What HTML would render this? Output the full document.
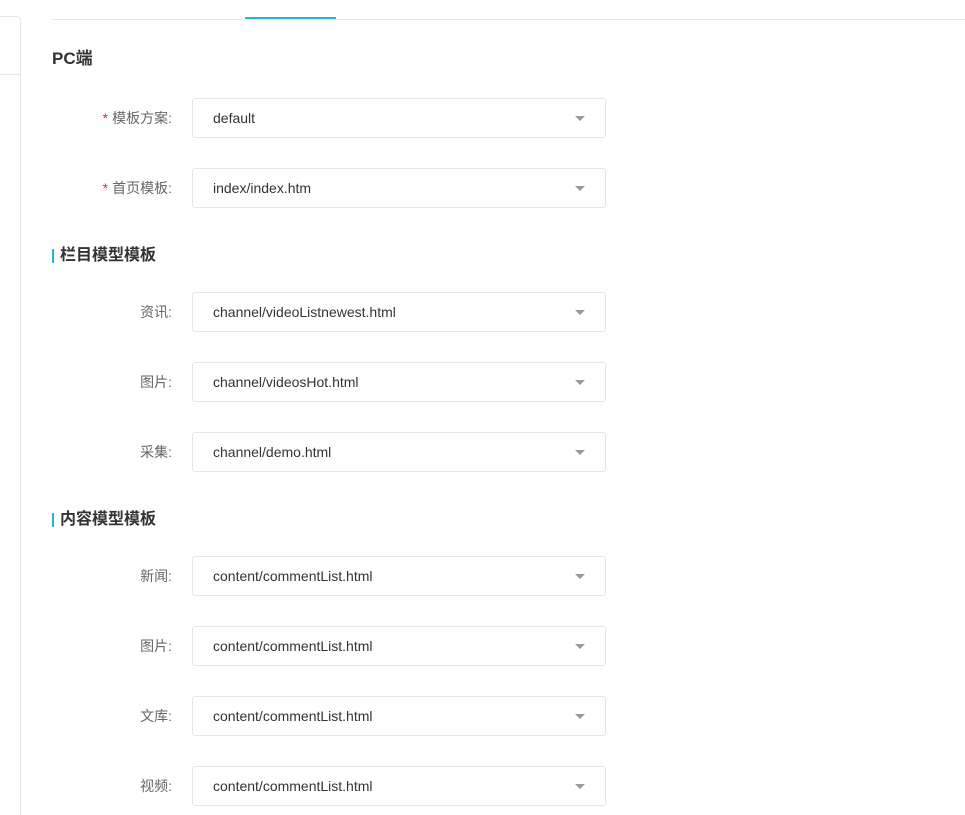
<!DOCTYPE html>
<html style="width:965px;height:815px;overflow:hidden"><head><meta charset="utf-8"><style>
body{margin:0;width:965px;height:815px;background:#fff;font-family:"Liberation Sans","Noto Sans CJK SC",sans-serif;position:relative;overflow:hidden;color:#333}
.lp{position:absolute;left:0;top:16px;width:20px;height:798px;border:1px solid #e6e6e6;border-left:none;border-bottom:none;border-radius:0 4px 0 0}
.lh{position:absolute;left:0;top:74px;width:21px;height:1px;background:#e6e6e6}
.tl{position:absolute;left:52px;top:19px;width:913px;height:1px;background:#e6e6e6}
.tb{position:absolute;left:245px;top:17px;width:91px;height:2px;background:#1fb5d6}
.h{position:absolute;left:52px;font-size:16px;font-weight:bold;color:#333;line-height:20px}
.h.bar{padding-left:8px}
.h.bar:before{content:"";position:absolute;left:0;top:3px;width:2px;height:14px;background:#1fb5d6}
.lab{position:absolute;right:793px;font-size:14px;color:#666;line-height:40px;white-space:nowrap}
.lab i{font-style:normal;color:#f5222d;margin-right:4px}
.sel{position:absolute;left:192px;height:38px;border:1px solid #e6e6e6;border-radius:3px;font-size:14px;color:#333;line-height:38px;padding-left:20px;box-sizing:content-box;width:392px}
.sel:after{content:"";position:absolute;right:20px;top:17px;border-left:5px solid transparent;border-right:5px solid transparent;border-top:5px solid #999}
</style></head><body>
<div class="lp"></div><div class="lh"></div>
<div class="tl"></div><div class="tb"></div>
<div class="h" style="top:49px;font-size:17px">PC端</div>
<div class="lab" style="top:98px"><i>*</i>模板方案:</div><div class="sel" style="top:98px">default</div>
<div class="lab" style="top:168px"><i>*</i>首页模板:</div><div class="sel" style="top:168px">index/index.htm</div>
<div class="h bar" style="top:246px">栏目模型模板</div>
<div class="lab" style="top:292px">资讯:</div><div class="sel" style="top:292px">channel/videoListnewest.html</div>
<div class="lab" style="top:362px">图片:</div><div class="sel" style="top:362px">channel/videosHot.html</div>
<div class="lab" style="top:432px">采集:</div><div class="sel" style="top:432px">channel/demo.html</div>
<div class="h bar" style="top:510px">内容模型模板</div>
<div class="lab" style="top:556px">新闻:</div><div class="sel" style="top:556px">content/commentList.html</div>
<div class="lab" style="top:626px">图片:</div><div class="sel" style="top:626px">content/commentList.html</div>
<div class="lab" style="top:696px">文库:</div><div class="sel" style="top:696px">content/commentList.html</div>
<div class="lab" style="top:766px">视频:</div><div class="sel" style="top:766px">content/commentList.html</div>
</body></html>
